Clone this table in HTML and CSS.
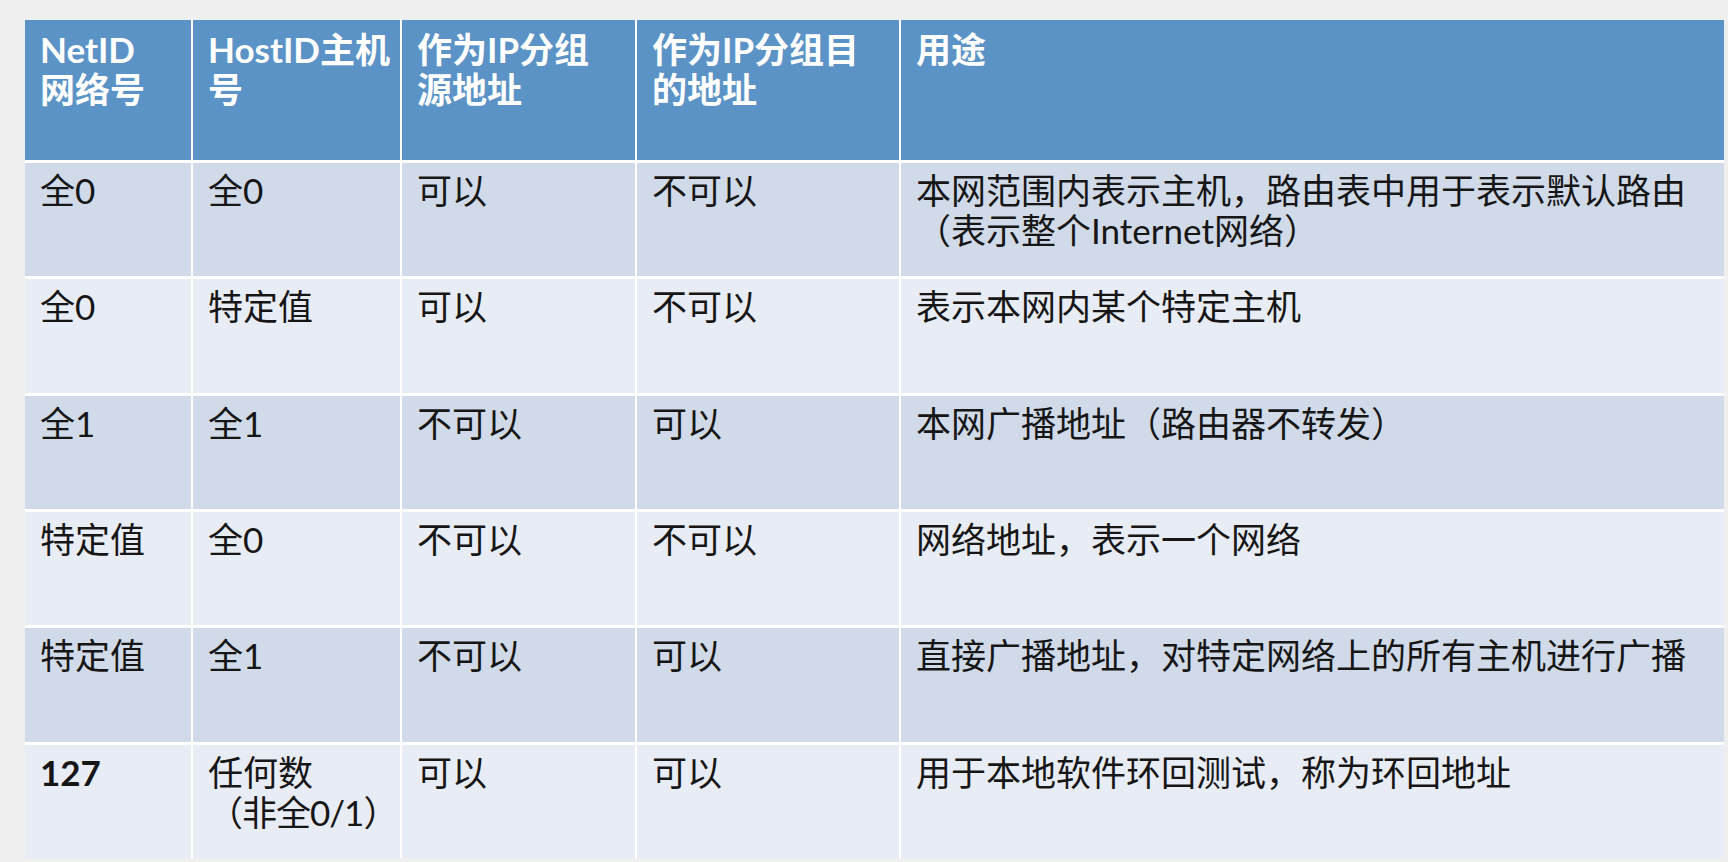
FILE: index.html
```html
<!DOCTYPE html>
<html lang="zh-CN">
<head>
<meta charset="utf-8">
<title>IP 特殊地址</title>
<link rel="stylesheet" href="styles.css">
</head>
<body>
<div class="page">
  <div class="table">
    <div class="cell head">NetID<br>网络号</div>
    <div class="cell head">HostID主机<br>号</div>
    <div class="cell head">作为IP分组<br>源地址</div>
    <div class="cell head">作为IP分组目<br>的地址</div>
    <div class="cell head">用途</div>

    <div class="cell odd">全0</div>
    <div class="cell odd">全0</div>
    <div class="cell odd">可以</div>
    <div class="cell odd">不可以</div>
    <div class="cell odd">本网范围内表示主机，路由表中用于表示默认路由<br>（表示整个Internet网络）</div>

    <div class="cell even">全0</div>
    <div class="cell even">特定值</div>
    <div class="cell even">可以</div>
    <div class="cell even">不可以</div>
    <div class="cell even">表示本网内某个特定主机</div>

    <div class="cell odd">全1</div>
    <div class="cell odd">全1</div>
    <div class="cell odd">不可以</div>
    <div class="cell odd">可以</div>
    <div class="cell odd">本网广播地址（路由器不转发）</div>

    <div class="cell even">特定值</div>
    <div class="cell even">全0</div>
    <div class="cell even">不可以</div>
    <div class="cell even">不可以</div>
    <div class="cell even">网络地址，表示一个网络</div>

    <div class="cell odd">特定值</div>
    <div class="cell odd">全1</div>
    <div class="cell odd">不可以</div>
    <div class="cell odd">可以</div>
    <div class="cell odd">直接广播地址，对特定网络上的所有主机进行广播</div>

    <div class="cell even bold">127</div>
    <div class="cell even">任何数<br><span class="paren">（非全0/1）</span></div>
    <div class="cell even">可以</div>
    <div class="cell even">可以</div>
    <div class="cell even">用于本地软件环回测试，称为环回地址</div>
  </div>
</div>
</body>
</html>
```

FILE: styles.css
```css
html, body {
  margin: 0;
  padding: 0;
  background: #efefef;
}

.page {
  width: 1728px;
  height: 862px;
  padding: 20px 0 0 25px;
  box-sizing: border-box;
  overflow: hidden;
}

.table {
  width: 1699px;
  height: 838px;
  display: grid;
  grid-template-columns: 166px 207px 233px 262px 1fr;
  grid-template-rows: 140px repeat(6, 1fr);
  column-gap: 2px;
  row-gap: 3px;
  background: #ffffff;
  font-family: Lato, "Noto Sans CJK SC", sans-serif;
  font-size: 35px;
  line-height: 40px;
}

.cell {
  padding: 7px 4px 0 15px;
  color: #161616;
  white-space: nowrap;
}

.head {
  padding-top: 9px;
  background: #5b93c6;
  color: #ffffff;
  font-weight: 700;
}

.odd {
  background: #d0dae8;
}

.even {
  background: #e8ecf4;
}

.bold {
  font-weight: 700;
}

.paren {
  letter-spacing: -1px;
}
```
